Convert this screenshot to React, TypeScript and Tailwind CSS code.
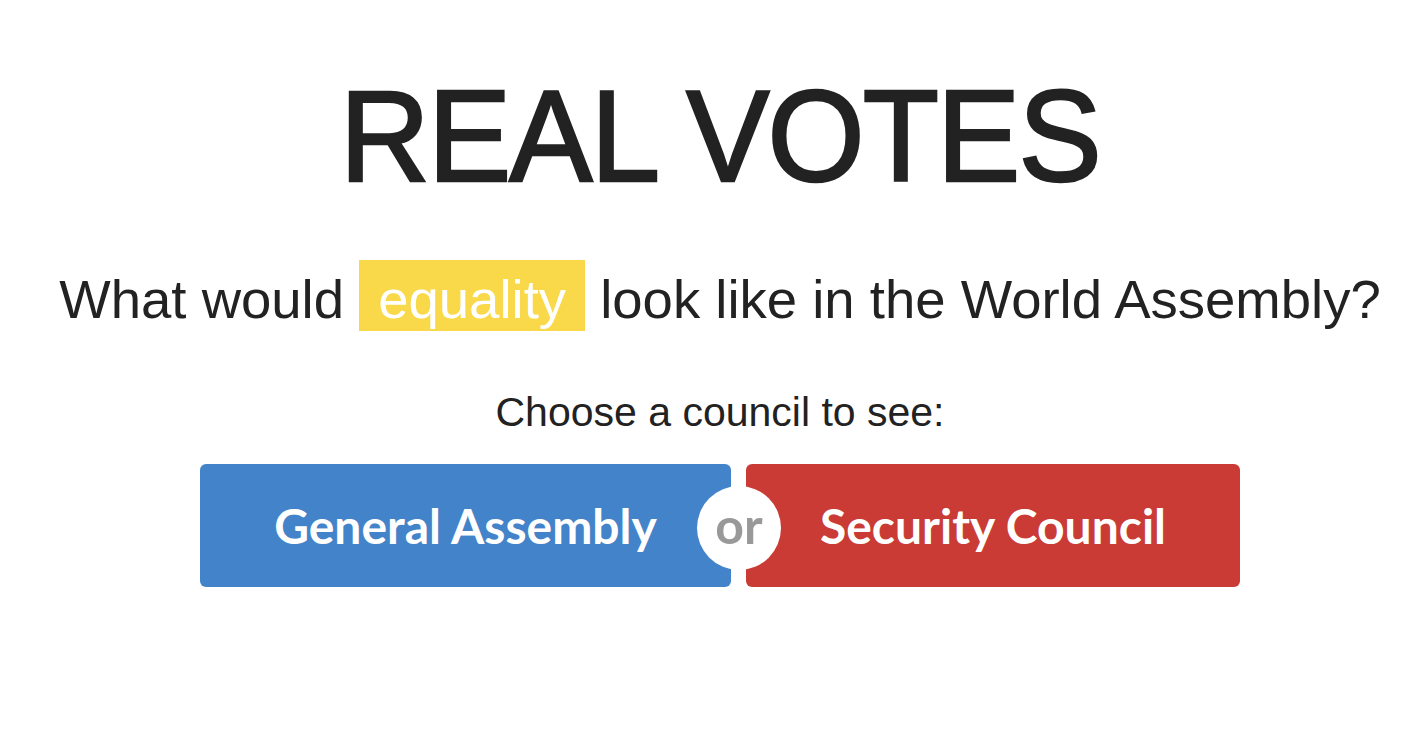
import React from "react";

const sans = "font-['Liberation_Sans',Arial,sans-serif]";
const lato = "font-['Lato','Liberation_Sans',sans-serif]";

const App = () => {
  return (
    <div className={`min-h-screen w-full bg-white text-[#222] ${sans}`}>
      <div className="flex flex-col items-center pt-[71px] pl-[14px]">
        {/* Title */}
        <h1 className="text-[130px] leading-[130px] font-normal tracking-[-2px] whitespace-nowrap scale-x-[0.96] [-webkit-text-stroke:2.5px_#222]">
          REAL VOTES
        </h1>

        {/* Question */}
        <p className="mt-[59px] text-[54.5px] leading-[71px] font-normal whitespace-nowrap">
          What would{" "}
          <span className="inline-block bg-[#f9d949] text-white px-[19px] pt-[8px] h-[71px] leading-[63px]">
            equality
          </span>{" "}
          look like in the World Assembly?
        </p>

        <p className="mt-[53px] text-[41px] leading-[48px]">
          Choose a council to see:
        </p>

        {/* Buttons */}
        <div className={`relative mt-[28px] flex gap-[15px] ${lato}`}>
          <button className="w-[531px] h-[123px] rounded-[6px] bg-[#4383c9] text-white text-[48px] font-bold">
            General Assembly
          </button>
          <button className="w-[494px] h-[123px] rounded-[6px] bg-[#c93b34] text-white text-[48px] font-bold">
            Security Council
          </button>
          <div className="absolute left-[497px] top-[22px] w-[84px] h-[84px] rounded-full bg-white flex items-center justify-center text-[#999] text-[50px] font-bold pb-[6px]">
            or
          </div>
        </div>
      </div>
    </div>
  );
};

export default App;
